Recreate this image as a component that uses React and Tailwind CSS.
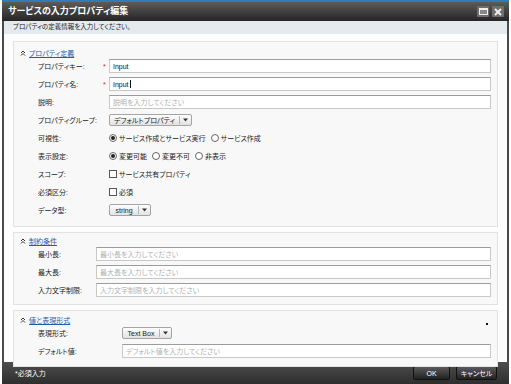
import React from 'react';

const FONT = { fontFamily: '"Liberation Sans", "Noto Sans CJK JP", sans-serif', fontFeatureSettings: '"palt"' };

const Chevrons = () => (
  <svg width="6" height="6" viewBox="0 0 6 6" className="shrink-0">
    <path d="M1 3 L3 1 L5 3 M1 5.5 L3 3.5 L5 5.5" fill="none" stroke="#333" strokeWidth="1" />
  </svg>
);

const SectionHeader = ({ title }) => (
  <div className="flex h-[8px] items-center gap-[3px] pl-[6px]">
    <Chevrons />
    <span className="text-[#1f5fb0] underline">{title}</span>
  </div>
);

const TextInput = ({ value, placeholder, caret }) => (
  <div className="flex h-[14px] flex-1 items-center border border-[#c8c8c8] border-t-[#9c9c9c] bg-white px-[3px]">
    {value ? (
      <span className="flex items-center text-[#111]">
        {value}
        {caret && <span className="ml-px h-[8px] w-px bg-[#111]" />}
      </span>
    ) : (
      <span className="text-[#b0b0b0]">{placeholder}</span>
    )}
  </div>
);

const Dropdown = ({ label, className }) => (
  <div className={`flex h-[12px] shrink-0 items-center whitespace-nowrap rounded-[2px] border border-[#a4a4a4] bg-gradient-to-b from-[#fefefe] to-[#e2e2e2] ${className}`}>
    <span className="flex-1 px-[4px] text-center text-[#222]">{label}</span>
    <span className="h-[8px] w-px bg-[#b4b4b4]" />
    <svg width="11" height="6" viewBox="0 0 11 6">
      <path d="M3 1.5 L8 1.5 L5.5 4.5 Z" fill="#333" />
    </svg>
  </div>
);

const Radio = ({ checked, label }) => (
  <div className="flex items-center gap-[2px] whitespace-nowrap">
    <span className="flex h-[8px] w-[8px] items-center justify-center rounded-full border border-[#666] bg-white">
      {checked && <span className="h-[4px] w-[4px] rounded-full bg-[#222]" />}
    </span>
    <span>{label}</span>
  </div>
);

const Checkbox = ({ label }) => (
  <div className="flex items-center gap-[2px]">
    <span className="h-[8px] w-[8px] border border-[#555] bg-white" />
    <span>{label}</span>
  </div>
);

const Row = ({ label, labelWidth, star, children }) => (
  <div className="flex h-[18px] items-center">
    <span className={`shrink-0 whitespace-nowrap ${labelWidth}`}>{label}</span>
    {star !== undefined && (
      <span className="w-[6px] shrink-0 text-[#d01818]">{star ? '*' : ''}</span>
    )}
    <div className="flex flex-1 items-center gap-[5px]">{children}</div>
  </div>
);

const Panel = ({ className, children }) => (
  <div className={`mx-[9px] border border-[#e2e2e2] bg-[#f8f8f8] ${className}`}>{children}</div>
);

export default function App() {
  return (
    <div className="h-[384px] w-[511px] bg-white text-[7px] leading-none text-[#222]" style={FONT}>
      <div className="mx-[2px] flex h-full flex-col">
        {/* title bar */}
        <div className="h-[2px] bg-[#2c7cc0]" />
        <div className="flex h-[19px] items-center justify-between bg-gradient-to-b from-[#5c5c5c] to-[#262626] pl-[6px] pr-[5px]">
          <span className="text-[9px] font-bold text-white">サービスの入力プロパティ編集</span>
          <div className="flex items-center gap-[3px]">
            <div className="flex h-[11px] w-[12px] items-center justify-center rounded-[1px] bg-[#6e6e6e]">
              <div className="h-[7px] w-[9px] border border-t-2 border-[#eee] bg-[#888]" />
            </div>
            <div className="flex h-[11px] w-[12px] items-center justify-center rounded-[1px] bg-[#6e6e6e]">
              <svg width="8" height="8" viewBox="0 0 8 8">
                <path d="M1 1 L7 7 M7 1 L1 7" stroke="#f2f2f2" strokeWidth="1.8" />
              </svg>
            </div>
          </div>
        </div>

        {/* body */}
        <div className="flex flex-1 flex-col border-x-2 border-[#4a4a4a] bg-[#fdfdfd]">
          <div className="flex h-[13px] items-center bg-[#e5eaef] pl-[9px] text-[6.5px]">
            プロパティの定義情報を入力してください。
          </div>

          <div className="flex h-[328px] flex-col gap-[5px] pt-[7px]">
            <Panel className="pb-[7px] pt-[7px]">
              <SectionHeader title="プロパティ定義" />
              <div className="pl-[24px] pr-[6px]">
                <Row label="プロパティキー:" labelWidth="w-[65px]" star>
                  <TextInput value="Input" />
                </Row>
                <Row label="プロパティ名:" labelWidth="w-[65px]" star>
                  <TextInput value="Input" caret />
                </Row>
                <Row label="説明:" labelWidth="w-[65px]" star={false}>
                  <TextInput placeholder="説明を入力してください" />
                </Row>
                <Row label="プロパティグループ:" labelWidth="w-[65px]" star={false}>
                  <Dropdown label="デフォルトプロパティ" />
                </Row>
                <Row label="可視性:" labelWidth="w-[65px]" star={false}>
                  <Radio checked label="サービス作成とサービス実行" />
                  <Radio label="サービス作成" />
                </Row>
                <Row label="表示設定:" labelWidth="w-[65px]" star={false}>
                  <Radio checked label="変更可能" />
                  <Radio label="変更不可" />
                  <Radio label="非表示" />
                </Row>
                <Row label="スコープ:" labelWidth="w-[65px]" star={false}>
                  <Checkbox label="サービス共有プロパティ" />
                </Row>
                <Row label="必須区分:" labelWidth="w-[65px]" star={false}>
                  <Checkbox label="必須" />
                </Row>
                <Row label="データ型:" labelWidth="w-[65px]" star={false}>
                  <Dropdown label="string" className="w-[42px]" />
                </Row>
              </div>
            </Panel>

            <Panel className="pb-[5px] pt-[4px]">
              <SectionHeader title="制約条件" />
              <div className="pl-[24px] pr-[6px]">
                <Row label="最小長:" labelWidth="w-[58px]">
                  <TextInput placeholder="最小長を入力してください" />
                </Row>
                <Row label="最大長:" labelWidth="w-[58px]">
                  <TextInput placeholder="最大長を入力してください" />
                </Row>
                <Row label="入力文字制限:" labelWidth="w-[58px]">
                  <TextInput placeholder="入力文字制限を入力してください" />
                </Row>
              </div>
            </Panel>

            <Panel className="relative pb-[6px] pt-[5px]">
              <span className="absolute right-[9px] top-[12px] h-[2px] w-[2px] bg-[#111]" />
              <SectionHeader title="値と表現形式" />
              <div className="pl-[24px] pr-[6px]">
                <Row label="表現形式:" labelWidth="w-[84px]">
                  <Dropdown label="Text Box" className="w-[50px]" />
                </Row>
                <Row label="デフォルト値:" labelWidth="w-[84px]">
                  <TextInput placeholder="デフォルト値を入力してください" />
                </Row>
              </div>
            </Panel>
          </div>
        </div>

        {/* footer */}
        <div className="flex h-[22px] items-center justify-between bg-gradient-to-b from-[#4e4e4e] to-[#2e2e2e] pl-[13px] pr-[12px] text-white">
          <span>*必須入力</span>
          <div className="flex items-center gap-[6px]">
            <button className="flex h-[14px] w-[37px] items-center justify-center rounded-[2px] border border-[#111] bg-gradient-to-b from-[#5a5a5a] to-[#222] text-white">
              OK
            </button>
            <button className="flex h-[14px] w-[41px] items-center justify-center rounded-[2px] border border-[#111] bg-gradient-to-b from-[#5a5a5a] to-[#222] text-white">
              キャンセル
            </button>
          </div>
        </div>
      </div>
    </div>
  );
}
